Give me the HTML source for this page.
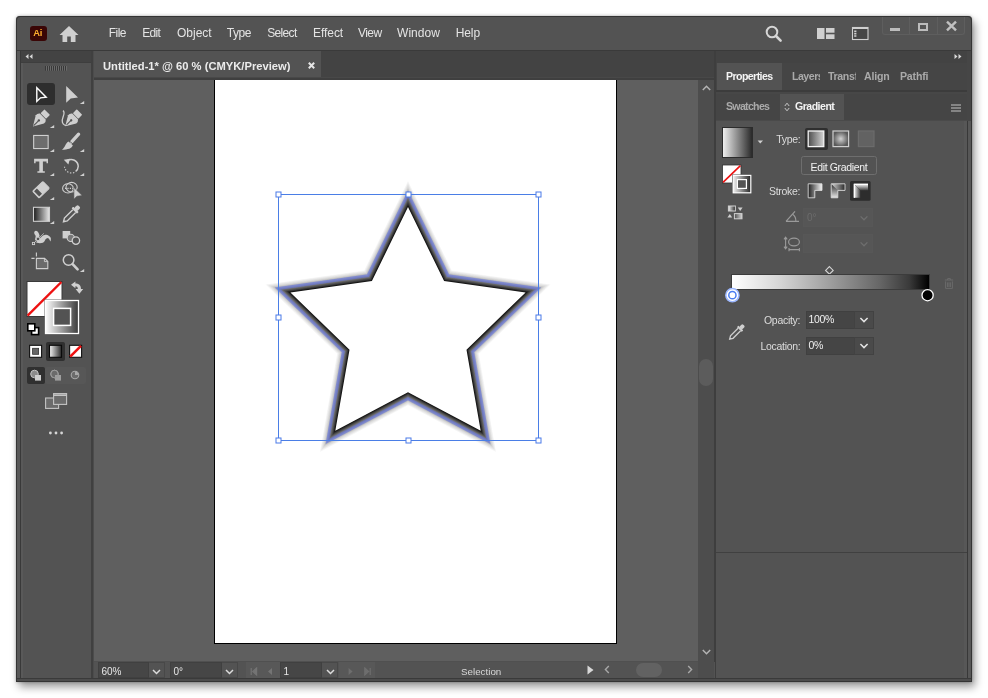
<!DOCTYPE html>
<html><head><meta charset="utf-8"><title>Illustrator</title>
<style>
*{box-sizing:border-box;margin:0;padding:0}
html,body{width:988px;height:698px;overflow:hidden;background:#fff}
body{position:relative;font-family:"Liberation Sans","DejaVu Sans",sans-serif;color:#dedede;font-size:12px}
.win{position:absolute;left:16px;top:16px;width:956px;height:666px;background:#535353;border-radius:4px 4px 0 0;box-shadow:3px 5px 9px rgba(0,0,0,.40),0 0 3px rgba(0,0,0,.3);overflow:hidden}
#o{position:absolute;left:-16px;top:-16px;width:988px;height:698px;will-change:transform}
#o div,#o span,#o svg{position:absolute}
#o svg{overflow:visible}
.t{white-space:nowrap;line-height:14px}
.menu .t{top:26px;font-size:12px;color:#e4e4e4}
.dim{color:#9b9b9b}
.fld{background:#454545;border:1px solid #3e3e3e}
</style></head><body>
<div class="win"><div id="o">
<!-- menubar -->
<div class="menu" style="left:16px;top:16px;width:956px;height:34px;background:#535353"></div>
<div class="menu" style="left:0;top:0"><span class="t" style="left:108.8px;letter-spacing:-0.53px">File</span><span class="t" style="left:142.2px;letter-spacing:-0.7px">Edit</span><span class="t" style="left:177.0px;letter-spacing:0px">Object</span><span class="t" style="left:226.79999999999998px;letter-spacing:-0.47px">Type</span><span class="t" style="left:267.3px;letter-spacing:-0.68px">Select</span><span class="t" style="left:313.0px;letter-spacing:-0.06px">Effect</span><span class="t" style="left:357.9px;letter-spacing:-0.53px">View</span><span class="t" style="left:397.0px;letter-spacing:0.06px">Window</span><span class="t" style="left:455.7px;letter-spacing:-0.1px">Help</span></div>
<div style="left:30px;top:25.6px;width:16.6px;height:15px;background:#3a0606;border-radius:3px"></div>
<span class="t" style="left:33.2px;top:26.4px;font-size:9.4px;font-weight:bold;color:#ffae2e;letter-spacing:-.2px">Ai</span>
<svg style="left:59px;top:24.6px" width="20" height="18" viewBox="0 0 20 18"><path d="M10 1 L19.5 10 H16.5 V17 H11.8 V11.5 H8.2 V17 H3.5 V10 H0.5 Z" fill="#cfcfcf"/></svg>
<svg style="left:764px;top:24px" width="22" height="22" viewBox="0 0 22 22"><circle cx="8" cy="8" r="5.3" fill="none" stroke="#d6d6d6" stroke-width="2"/><path d="M12 12 L16.6 16.6" stroke="#d6d6d6" stroke-width="2.6" stroke-linecap="round"/></svg>
<svg style="left:817px;top:28px" width="18" height="12" viewBox="0 0 18 12"><rect x="0" y="0" width="7.5" height="11" fill="#d0d0d0"/><rect x="9" y="0" width="8.5" height="4.7" fill="#d0d0d0"/><rect x="9" y="6.3" width="8.5" height="4.7" fill="#d0d0d0"/></svg>
<svg style="left:852px;top:27px" width="17" height="13" viewBox="0 0 17 13"><rect x=".5" y=".5" width="15.5" height="12" fill="#464646" stroke="#d0d0d0" stroke-width="1.1"/><path d="M.5 1.2 H16" stroke="#d0d0d0" stroke-width="1.6"/><path d="M3.3 3.4 V10.4" stroke="#d0d0d0" stroke-width="2.2" stroke-dasharray="1.6 .8"/></svg>
<div style="left:882px;top:17px;width:83px;height:18px;border:1px solid #5e5e5e;border-top:none;border-radius:0 0 3px 3px;background:#555"></div>
<div style="left:909px;top:17px;width:1px;height:17px;background:#5e5e5e"></div>
<div style="left:937px;top:17px;width:1px;height:17px;background:#5e5e5e"></div>
<div style="left:890px;top:28px;width:10px;height:3px;background:#bcbcbc"></div>
<div style="left:918px;top:22.5px;width:10.4px;height:8.4px;border:2px solid #bcbcbc"></div>
<svg style="left:945.5px;top:20.5px" width="11" height="10" viewBox="0 0 11 10"><path d="M1 .6 L10 9.4 M10 .6 L1 9.4" stroke="#c0c0c0" stroke-width="2.4"/></svg>
<!-- toolbar -->
<div style="left:16px;top:50px;width:78px;height:632px;background:#535353"></div>
<div style="left:16px;top:50px;width:5px;height:632px;background:#575757"></div>
<div style="left:20px;top:50px;width:1px;height:628px;background:#393939"></div>
<div style="left:21px;top:63px;width:2px;height:615px;background:#595959"></div>
<div style="left:21px;top:50px;width:70px;height:12px;background:#434343"></div>
<div style="left:21px;top:62px;width:70px;height:1px;background:#3e3e3e"></div>
<div style="left:91px;top:50px;width:2px;height:632px;background:#404040"></div>
<div style="left:93px;top:50px;width:1px;height:632px;background:#4c4c4c"></div>
<svg style="left:25.4px;top:54.2px" width="8" height="5" viewBox="0 0 8 6" preserveAspectRatio="none"><path d="M3.5 0 L0.5 3 L3.5 6 Z M7.5 0 L4.5 3 L7.5 6 Z" fill="#d8d8d8"/></svg>
<svg style="left:45px;top:65.6px" width="23" height="5"><rect x="0" y="0" width="1" height="4.6" fill="#383838"/><rect x="1" y="0" width="1" height="4.6" fill="#6a6a6a"/><rect x="2" y="0" width="1" height="4.6" fill="#383838"/><rect x="3" y="0" width="1" height="4.6" fill="#6a6a6a"/><rect x="4" y="0" width="1" height="4.6" fill="#383838"/><rect x="5" y="0" width="1" height="4.6" fill="#6a6a6a"/><rect x="6" y="0" width="1" height="4.6" fill="#383838"/><rect x="7" y="0" width="1" height="4.6" fill="#6a6a6a"/><rect x="8" y="0" width="1" height="4.6" fill="#383838"/><rect x="9" y="0" width="1" height="4.6" fill="#6a6a6a"/><rect x="10" y="0" width="1" height="4.6" fill="#383838"/><rect x="11" y="0" width="1" height="4.6" fill="#6a6a6a"/><rect x="12" y="0" width="1" height="4.6" fill="#383838"/><rect x="13" y="0" width="1" height="4.6" fill="#6a6a6a"/><rect x="14" y="0" width="1" height="4.6" fill="#383838"/><rect x="15" y="0" width="1" height="4.6" fill="#6a6a6a"/><rect x="16" y="0" width="1" height="4.6" fill="#383838"/><rect x="17" y="0" width="1" height="4.6" fill="#6a6a6a"/><rect x="18" y="0" width="1" height="4.6" fill="#383838"/><rect x="19" y="0" width="1" height="4.6" fill="#6a6a6a"/><rect x="20" y="0" width="1" height="4.6" fill="#383838"/><rect x="21" y="0" width="1" height="4.6" fill="#6a6a6a"/></svg>
<div style="left:27px;top:83px;width:28px;height:22px;background:#2e2e2e;border-radius:3px"></div>
<svg style="left:0;top:0" width="0" height="0"><defs><linearGradient id="tg" x1="0" x2="1"><stop offset="0" stop-color="#1c1c1c"/><stop offset="1" stop-color="#e8e8e8"/></linearGradient></defs></svg>
<svg style="left:29px;top:82px" width="24" height="24" viewBox="0 0 24 24"><path d="M7.8 5.8 V19.4 L11.5 15.8 L17.2 15.2 Z" fill="none" stroke="#fff" stroke-width="1.4" stroke-linejoin="miter"/></svg>
<svg style="left:60px;top:82px" width="24" height="24" viewBox="0 0 24 24"><path d="M6.2 4 V20.8 L10.7 16.4 L18 15.6 Z" fill="#cfcfcf"/><path d="M24.2 19 V22 H19.8 Z" fill="#cfcfcf"/></svg>
<svg style="left:29px;top:106px" width="24" height="24" viewBox="0 0 24 24"><g transform="translate(-0.3 0.6) rotate(45 12 12)"><path d="M12 23 L6.2 13.2 Q5.8 10.6 7.9 9 H16.1 Q18.2 10.6 17.8 13.2 Z" fill="#cfcfcf"/><path d="M12 22 V15.5" stroke="#535353" stroke-width="1.1"/><circle cx="12" cy="14.6" r="1.2" fill="#535353"/><rect x="8.1" y="2.8" width="7.8" height="5.6" rx=".8" fill="#cfcfcf"/></g><path d="M25.2 19 V22 H20.8 Z" fill="#cfcfcf"/></svg>
<svg style="left:60px;top:106px" width="24" height="24" viewBox="0 0 24 24"><g transform="translate(1.0 0.5) rotate(45 12 12)"><path d="M12 23 L6.2 13.2 Q5.8 10.6 7.9 9 H16.1 Q18.2 10.6 17.8 13.2 Z" fill="#cfcfcf"/><path d="M12 22 V15.5" stroke="#535353" stroke-width="1.1"/><circle cx="12" cy="14.6" r="1.2" fill="#535353"/><rect x="8.1" y="2.8" width="7.8" height="5.6" rx=".8" fill="#cfcfcf"/></g><path d="M3 4.6 C6.5 7 1 12 2.4 16.4 C3.2 19 5.4 19.8 7.4 19" fill="none" stroke="#cfcfcf" stroke-width="1.3"/></svg>
<svg style="left:29px;top:130px" width="24" height="24" viewBox="0 0 24 24"><rect x="4.65" y="5.45" width="14.5" height="13.1" fill="#6d6d6d" stroke="#cfcfcf" stroke-width="1.1"/><path d="M25.2 19 V22 H20.8 Z" fill="#cfcfcf"/></svg>
<svg style="left:60px;top:130px" width="24" height="24" viewBox="0 0 24 24"><path d="M18.6 4.2 L11.4 12.2" stroke="#cfcfcf" stroke-width="3.3" stroke-linecap="round"/><path d="M8.4 11.4 L12.8 15.2 C12 18.2 8 19.7 1.8 19.7 C5.2 17.6 5.4 13.2 8.4 11.4 Z" fill="#cfcfcf"/><path d="M8.6 10.4 L13.6 14.6" stroke="#535353" stroke-width=".9"/><path d="M24.2 19 V22 H19.8 Z" fill="#cfcfcf"/></svg>
<svg style="left:29px;top:154px" width="24" height="24" viewBox="0 0 24 24"><path d="M5.1 4.8 H19 V9.2 H17.5 V7.5 H13.9 V17.3 H15.8 V18.8 H8.4 V17.3 H10.3 V7.5 H6.6 V9.2 H5.1 Z" fill="#cfcfcf"/><path d="M25.2 19 V22 H20.8 Z" fill="#cfcfcf"/></svg>
<svg style="left:60px;top:154px" width="24" height="24" viewBox="0 0 24 24"><g transform="translate(11.2 11.8) scale(.88) translate(-12 -12)"><path d="M7.5 6.2 A8 8 0 0 1 20 12.5 A8 8 0 0 1 17 18.5" fill="none" stroke="#cfcfcf" stroke-width="1.7"/><path d="M3.6 5.2 L10.6 4 L8.8 10.6 Z" fill="#cfcfcf"/><path d="M15.5 19.6 A8 8 0 0 1 4.4 13" fill="none" stroke="#cfcfcf" stroke-width="1.3" stroke-dasharray="1.6 1.8"/></g><path d="M24.2 19 V22 H19.8 Z" fill="#cfcfcf"/></svg>
<svg style="left:29px;top:178px" width="24" height="24" viewBox="0 0 24 24"><g transform="translate(12 11.7) rotate(-44) scale(.94)"><rect x="-7.6" y="-5" width="15.2" height="10" rx="1" fill="#cfcfcf"/><rect x="-6.5" y="-3.9" width="4.2" height="7.8" fill="#535353"/><rect x="-7.6" y="-5" width="15.2" height="10" rx="1" fill="none" stroke="#cfcfcf" stroke-width="1.1"/></g><path d="M25.2 19 V22 H20.8 Z" fill="#cfcfcf"/></svg>
<svg style="left:60px;top:178px" width="24" height="24" viewBox="0 0 24 24"><ellipse cx="8" cy="10.4" rx="5.4" ry="4.6" fill="none" stroke="#cfcfcf" stroke-width="1.1"/><ellipse cx="11.6" cy="9.2" rx="5.6" ry="4.8" fill="none" stroke="#cfcfcf" stroke-width="1.1"/><path d="M5 10.4 H13" stroke="#cfcfcf" stroke-width="1.3" stroke-dasharray="1.2 1.2"/><path d="M13.9 9.4 V21.2 L17 18.2 L22.2 17.6 Z" fill="#cfcfcf" stroke="#535353" stroke-width=".6"/></svg>
<svg style="left:29px;top:202px" width="24" height="24" viewBox="0 0 24 24"><rect x="4.5" y="5.3" width="16" height="14" fill="url(#tg)" stroke="#cfcfcf" stroke-width="1.1"/><path d="M25.2 19 V22 H20.8 Z" fill="#cfcfcf"/></svg>
<svg style="left:60px;top:202px" width="24" height="24" viewBox="0 0 24 24"><g transform="translate(-1 .3) rotate(45 12 12)"><rect x="9.8" y="0.5" width="4.4" height="5" rx="1.5" fill="#cfcfcf"/><rect x="8.2" y="5" width="7.6" height="2.4" rx=".6" fill="#cfcfcf"/><path d="M10 7.4 V19.3 L12 22.6 L14 19.3 V7.4" fill="none" stroke="#cfcfcf" stroke-width="1.4"/></g></svg>
<svg style="left:29px;top:226px" width="24" height="24" viewBox="0 0 24 24"><path d="M5.4 5.8 C6 4.6 7.6 4.6 8.6 5.6 C10 7 10.4 9 10.9 11 C12.4 10.4 13.8 9.2 15.8 9 C17.4 8.6 18.6 9 19.7 9.7 C21.2 10.6 22 11.6 21.9 12.9 C21.9 14 21.7 14.8 21.3 15.5 C20.8 14 20.2 12.6 19 11.9 C17.8 12 17 12.6 16.4 13.5 C15.8 15 15 16.2 13.8 16.8 C12 17.4 10 17.4 8 16.8 C6.6 16.2 6 15.4 6 14.2 C6 12.8 6.6 11.6 6.7 10.3 C6.6 9.2 5.8 8.6 5.4 7.7 C5.1 7 5.1 6.4 5.4 5.8 Z" fill="#cfcfcf"/><path d="M4.6 17.4 L14.8 7.4" stroke="#535353" stroke-width="1.6"/><path d="M4.6 17.4 L14.8 7.4" stroke="#cfcfcf" stroke-width=".8"/><circle cx="9" cy="12.9" r="1.8" fill="#535353" stroke="#cfcfcf" stroke-width=".9"/><rect x="3.4" y="16.4" width="2.2" height="2.2" fill="#535353" stroke="#cfcfcf" stroke-width=".9"/></svg>
<svg style="left:60px;top:226px" width="24" height="24" viewBox="0 0 24 24"><rect x="2.6" y="5" width="7.6" height="7.4" fill="#cfcfcf"/><circle cx="10.8" cy="11.9" r="3.6" fill="#777" stroke="#cfcfcf" stroke-width="1.1"/><circle cx="15.9" cy="14.6" r="3.7" fill="#535353" stroke="#cfcfcf" stroke-width="1.3"/></svg>
<svg style="left:29px;top:250px" width="24" height="24" viewBox="0 0 24 24"><path d="M7.4 8.4 H15.6 L18.8 11.4 V18.6 H7.4 Z" fill="#6b6b6b" stroke="#cfcfcf" stroke-width="1.1"/><path d="M15.4 8.6 V11.6 H18.6" fill="none" stroke="#cfcfcf" stroke-width=".9"/><path d="M7.4 2.4 V6.6 M2.4 8.4 H5.6" stroke="#cfcfcf" stroke-width="1.1"/></svg>
<svg style="left:60px;top:250px" width="24" height="24" viewBox="0 0 24 24"><circle cx="8.6" cy="10" r="5.3" fill="none" stroke="#cfcfcf" stroke-width="1.5"/><path d="M12.6 14.2 L17.6 19.4" stroke="#cfcfcf" stroke-width="2.6" stroke-linecap="round"/><path d="M24.2 19 V22 H19.8 Z" fill="#cfcfcf"/></svg>
<svg style="left:0;top:0" width="988" height="698" viewBox="0 0 988 698">
<defs><linearGradient id="sg" x1="0" x2="1"><stop offset="0" stop-color="#fdfdfd"/><stop offset="1" stop-color="#3a3a3a"/></linearGradient>
<linearGradient id="sg2" x1="0" x2="1"><stop offset="0" stop-color="#f4f4f4"/><stop offset="1" stop-color="#2a2a2a"/></linearGradient></defs>
<rect x="27" y="281.5" width="35" height="35" fill="#fff" stroke="#3a3a3a" stroke-width="1"/>
<path d="M27.6 315.6 L61.4 282" stroke="#ee1111" stroke-width="2.4"/>
<rect x="44.5" y="299.5" width="35" height="35" fill="#535353"/>
<rect x="45.5" y="300.5" width="33" height="33" fill="url(#sg)" stroke="#fff" stroke-width="1.3"/>
<rect x="53.6" y="308.4" width="17" height="17" fill="#535353" stroke="#fff" stroke-width="1.5"/>
<path d="M71 284.8 L75.4 281.4 V283.5 C79.8 283.5 81 286 81 289 H83.2 L79.4 293.8 L75.6 289 H77.8 C77.8 287.2 77.2 286.2 75.4 286.2 V288.2 Z" fill="#cfcfcf"/>
<rect x="31.6" y="327.6" width="7" height="7" fill="#fff" stroke="#000" stroke-width="1.6"/>
<rect x="27.8" y="323.8" width="7" height="7" fill="#fff" stroke="#000" stroke-width="1.6"/>
<rect x="46" y="342" width="19" height="19" rx="2" fill="#303030"/>
<rect x="29.6" y="345.3" width="12" height="12" fill="#fff" stroke="#111" stroke-width="1.1"/>
<rect x="32.6" y="348.3" width="6" height="6" fill="#666" stroke="#333" stroke-width=".8"/>
<rect x="49.5" y="345.3" width="12" height="12" fill="url(#sg2)" stroke="#0a0a0a" stroke-width="1.1"/>
<rect x="69.6" y="345.3" width="12" height="12" fill="#fff" stroke="#111" stroke-width="1.1"/>
<path d="M70.2 356.7 L81 345.9" stroke="#ee1111" stroke-width="2.6"/>
<rect x="45" y="367" width="41" height="17" rx="2" fill="#575757"/>
<rect x="27" y="367" width="18" height="17" rx="2" fill="#303030"/>
<circle cx="34.5" cy="374" r="3.8" fill="#8c8c8c" stroke="#c4c4c4" stroke-width="1"/><rect x="35" y="375" width="6" height="5.6" fill="#d0d0d0"/>
<circle cx="54.5" cy="374" r="3.8" fill="#6b6b6b" stroke="#9a9a9a" stroke-width="1"/><rect x="55" y="375" width="6" height="5.6" fill="#9e9e9e"/><circle cx="54.5" cy="374" r="3.8" fill="none" stroke="#9a9a9a" stroke-width="1"/>
<circle cx="75" cy="375" r="3.8" fill="#6b6b6b" stroke="#a8a8a8" stroke-width="1.1"/><path d="M75 375 V371.4 A3.6 3.6 0 0 1 78.6 375 Z" fill="#a8a8a8"/>
<rect x="45.6" y="398" width="13" height="10.4" fill="#6b6b6b" stroke="#c4c4c4" stroke-width="1.1"/>
<rect x="53.6" y="393.6" width="13" height="10.8" fill="#6b6b6b" stroke="#c4c4c4" stroke-width="1.1"/><path d="M53.6 395.2 H66.6" stroke="#c4c4c4" stroke-width="1.6"/>
<circle cx="50.4" cy="433" r="1.4" fill="#d6d6d6"/><circle cx="56" cy="433" r="1.4" fill="#d6d6d6"/><circle cx="61.6" cy="433" r="1.4" fill="#d6d6d6"/>
</svg>

<!-- tabbar -->
<div style="left:94px;top:50px;width:621px;height:30px;background:#434343"></div>
<div style="left:94px;top:50px;width:227px;height:28px;background:#535353"></div>
<div style="left:94px;top:77px;width:621px;height:1px;background:#484848"></div>
<div style="left:94px;top:78px;width:621px;height:2px;background:#3f3f3f"></div>
<span class="t" style="left:103px;top:58.5px;font-size:11.2px;font-weight:bold;color:#ececec;letter-spacing:0px">Untitled-1* @ 60 % (CMYK/Preview)</span>
<svg style="left:307.5px;top:62px" width="7" height="7" viewBox="0 0 7 7"><path d="M.8 .8 L6.2 6.2 M6.2 .8 L.8 6.2" stroke="#e6e6e6" stroke-width="2"/></svg>
<!-- canvas -->
<div style="left:94px;top:80px;width:604px;height:582px;background:#5f5f5f;overflow:hidden">
<div style="left:120px;top:-11px;width:403px;height:575px;background:#fff;border:1px solid #000"></div>
</div>
<svg style="left:0;top:0" width="988" height="698" viewBox="0 0 988 698">
<polygon points="408.0,180.9 451.8,270.4 550.5,284.4 478.9,353.7 496.0,451.9 408.0,405.2 320.0,451.9 337.1,353.7 265.5,284.4 364.2,270.4" fill="#f7f7f7"/>
<polygon points="408.0,182.2 451.4,270.9 549.2,284.8 478.2,353.5 495.3,450.8 408.0,404.6 320.7,450.8 337.8,353.5 266.8,284.8 364.6,270.9" fill="#f0f0f0"/>
<polygon points="408.0,183.5 451.0,271.5 548.0,285.2 477.6,353.3 494.5,449.8 408.0,403.9 321.5,449.8 338.4,353.3 268.0,285.2 365.0,271.5" fill="#e9e9e9"/>
<polygon points="408.0,184.8 450.6,272.0 546.7,285.6 477.0,353.1 493.7,448.7 408.0,403.3 322.3,448.7 339.0,353.1 269.3,285.6 365.4,272.0" fill="#e2e2e2"/>
<polygon points="408.0,186.2 450.3,272.5 545.5,286.0 476.4,352.9 493.0,447.6 408.0,402.6 323.0,447.6 339.6,352.9 270.5,286.0 365.7,272.5" fill="#dbdbdb"/>
<polygon points="408.0,187.5 449.9,273.1 544.2,286.4 475.8,352.7 492.2,446.6 408.0,402.0 323.8,446.6 340.2,352.7 271.8,286.4 366.1,273.1" fill="#d2d2d2"/>
<polygon points="408.0,188.8 449.5,273.6 543.0,286.8 475.1,352.5 491.4,445.5 408.0,401.3 324.6,445.5 340.9,352.5 273.0,286.8 366.5,273.6" fill="#c6c6c6"/>
<polygon points="408.0,190.1 449.1,274.1 541.7,287.2 474.5,352.3 490.7,444.5 408.0,400.7 325.3,444.5 341.5,352.3 274.3,287.2 366.9,274.1" fill="#bababa"/>
<polygon points="408.0,191.4 448.7,274.6 540.5,287.6 473.9,352.1 489.9,443.4 408.0,400.0 326.1,443.4 342.1,352.1 275.5,287.6 367.3,274.6" fill="#aeaeae"/>
<polygon points="408.0,192.7 448.4,275.2 539.3,288.1 473.3,351.9 489.1,442.4 408.0,399.4 326.9,442.4 342.7,351.9 276.7,288.1 367.6,275.2" fill="#a2a2a2"/>
<polygon points="408.0,194.0 448.0,275.7 538.0,288.5 472.7,351.7 488.4,441.3 408.0,398.7 327.6,441.3 343.3,351.7 278.0,288.5 368.0,275.7" fill="#959595"/>
<polygon points="408.0,195.3 447.6,276.2 536.8,288.9 472.1,351.5 487.6,440.2 408.0,398.0 328.4,440.2 343.9,351.5 279.2,288.9 368.4,276.2" fill="#888888"/>
<polygon points="408.0,196.6 447.2,276.7 535.5,289.3 471.4,351.3 486.8,439.2 408.0,397.4 329.2,439.2 344.6,351.3 280.5,289.3 368.8,276.7" fill="#7a7a7a"/>
<polygon points="408.0,197.9 446.8,277.3 534.3,289.7 470.8,351.1 486.0,438.1 408.0,396.7 330.0,438.1 345.2,351.1 281.7,289.7 369.2,277.3" fill="#6c6c6c"/>
<polygon points="408.0,199.2 446.4,277.8 533.0,290.1 470.2,350.9 485.3,437.1 408.0,396.1 330.7,437.1 345.8,350.9 283.0,290.1 369.6,277.8" fill="#5e5e5e"/>
<polygon points="408.0,200.5 446.1,278.3 531.8,290.5 469.6,350.7 484.5,436.0 408.0,395.4 331.5,436.0 346.4,350.7 284.2,290.5 369.9,278.3" fill="#515151"/>
<polygon points="408.0,201.8 445.7,278.8 530.5,290.9 469.0,350.5 483.7,434.9 408.0,394.8 332.3,434.9 347.0,350.5 285.5,290.9 370.3,278.8" fill="#424242"/>
<polygon points="408.0,203.2 445.3,279.4 529.3,291.3 468.3,350.3 483.0,433.9 408.0,394.1 333.0,433.9 347.7,350.3 286.7,291.3 370.7,279.4" fill="#313131"/>
<polygon points="408.0,204.5 444.9,279.9 528.1,291.7 467.7,350.1 482.2,432.8 408.0,393.5 333.8,432.8 348.3,350.1 287.9,291.7 371.1,279.9" fill="#212121"/>
<polygon points="408.0,205.8 444.5,280.4 526.8,292.1 467.1,349.9 481.4,431.8 408.0,392.8 334.6,431.8 348.9,349.9 289.2,292.1 371.5,280.4" fill="#101010"/>
<polygon points="408.0,207.1 444.1,281.0 525.6,292.5 466.5,349.7 480.7,430.7 408.0,392.2 335.3,430.7 349.5,349.7 290.4,292.5 371.9,281.0" fill="#ffffff"/>
<polygon points="408.0,194.0 448.0,275.7 538.0,288.5 472.7,351.7 488.4,441.3 408.0,398.7 327.6,441.3 343.3,351.7 278.0,288.5 368.0,275.7" fill="none" stroke="#5468f0" stroke-width="3" stroke-opacity=".5"/>
<rect x="278.5" y="194.5" width="260.0" height="246.0" fill="none" stroke="#4a7ee6" stroke-width="1"/>
<rect x="276.0" y="192.0" width="5" height="5" fill="#fff" stroke="#4a7ae8" stroke-width="1"/>
<rect x="276.0" y="315.0" width="5" height="5" fill="#fff" stroke="#4a7ae8" stroke-width="1"/>
<rect x="276.0" y="438.0" width="5" height="5" fill="#fff" stroke="#4a7ae8" stroke-width="1"/>
<rect x="406.0" y="192.0" width="5" height="5" fill="#fff" stroke="#4a7ae8" stroke-width="1"/>
<rect x="406.0" y="438.0" width="5" height="5" fill="#fff" stroke="#4a7ae8" stroke-width="1"/>
<rect x="536.0" y="192.0" width="5" height="5" fill="#fff" stroke="#4a7ae8" stroke-width="1"/>
<rect x="536.0" y="315.0" width="5" height="5" fill="#fff" stroke="#4a7ae8" stroke-width="1"/>
<rect x="536.0" y="438.0" width="5" height="5" fill="#fff" stroke="#4a7ae8" stroke-width="1"/>
</svg>

<div style="left:698px;top:80px;width:16px;height:582px;background:#4d4d4d"></div>
<div style="left:699px;top:358.5px;width:14px;height:27px;background:#5c5c5c;border-radius:7px"></div>
<svg style="left:702px;top:85px" width="9" height="6" viewBox="0 0 9 6"><path d="M.8 5 L4.5 1.3 L8.2 5" fill="none" stroke="#b4b4b4" stroke-width="1.5"/></svg>
<svg style="left:702px;top:649px" width="9" height="6" viewBox="0 0 9 6"><path d="M.8 1 L4.5 4.7 L8.2 1" fill="none" stroke="#b4b4b4" stroke-width="1.5"/></svg>
<div style="left:714px;top:50px;width:2px;height:632px;background:#3e3e3e"></div>
<div style="left:94px;top:662px;width:621px;height:16px;background:#535353"></div>
<div style="left:94px;top:661px;width:604px;height:1px;background:#505050"></div>
<div style="left:98px;top:662px;width:51px;height:16px;background:#464646;border:1px solid #404040"></div>
<span class="t" style="left:101.4px;top:664.8px;font-size:10px;color:#e6e6e6">60%</span>
<div style="left:170px;top:662px;width:52px;height:16px;background:#464646;border:1px solid #404040"></div>
<span class="t" style="left:173.4px;top:664.8px;font-size:10px;color:#e6e6e6">0°</span>
<div style="left:280px;top:662px;width:42px;height:16px;background:#464646;border:1px solid #404040"></div>
<span class="t" style="left:283.4px;top:664.8px;font-size:10px;color:#e6e6e6">1</span>
<svg style="left:152px;top:669px" width="9" height="6" viewBox="0 0 9 6"><path d="M1 1 L4.5 4.5 L8 1" fill="none" stroke="#dcdcdc" stroke-width="1.5"/></svg>
<svg style="left:225px;top:669px" width="9" height="6" viewBox="0 0 9 6"><path d="M1 1 L4.5 4.5 L8 1" fill="none" stroke="#dcdcdc" stroke-width="1.5"/></svg>
<svg style="left:326px;top:669px" width="9" height="6" viewBox="0 0 9 6"><path d="M1 1 L4.5 4.5 L8 1" fill="none" stroke="#dcdcdc" stroke-width="1.5"/></svg>
<div style="left:149px;top:662px;width:16px;height:16px;border:1px solid #484848;border-left:none"></div>
<div style="left:222px;top:662px;width:16px;height:16px;border:1px solid #484848;border-left:none"></div>
<div style="left:322px;top:662px;width:16px;height:16px;border:1px solid #484848;border-left:none"></div>
<svg style="left:246px;top:662px" width="130" height="16" viewBox="0 0 130 16">
<rect x="0" y="0" width="34" height="16" fill="#585858"/><rect x="93" y="0" width="36" height="16" fill="#585858"/>
<path d="M5.2 6 V13 M10.6 6 L6.8 9.5 L10.6 13 Z" stroke="#747474" stroke-width="1.2" fill="#747474"/>
<path d="M26 6 L22 9.5 L26 13 Z" fill="#747474"/>
<path d="M102.6 6 L106.6 9.5 L102.6 13 Z" fill="#6e6e6e"/>
<path d="M118.8 6 L122.6 9.5 L118.8 13 Z M124.2 6 V13" stroke="#6e6e6e" stroke-width="1.2" fill="#6e6e6e"/>
</svg>
<span class="t" style="left:461px;top:664.5px;font-size:9.8px;color:#d8d8d8">Selection</span>
<svg style="left:587px;top:665px" width="7" height="10" viewBox="0 0 7 10"><path d="M.5 .5 L6.5 5 L.5 9.5 Z" fill="#d8d8d8"/></svg>
<svg style="left:604px;top:665px" width="6" height="9" viewBox="0 0 6 9"><path d="M4.8 1 L1.4 4.5 L4.8 8" fill="none" stroke="#a8a8a8" stroke-width="1.4"/></svg>
<svg style="left:687px;top:665px" width="6" height="9" viewBox="0 0 6 9"><path d="M1.2 1 L4.6 4.5 L1.2 8" fill="none" stroke="#a8a8a8" stroke-width="1.4"/></svg>
<div style="left:636px;top:663px;width:26px;height:14px;background:#626262;border-radius:7px"></div>
<div style="left:698px;top:662px;width:16px;height:16px;background:#4d4d4d"></div>

<div style="left:716px;top:50px;width:256px;height:632px;background:#535353"></div>
<div style="left:716px;top:50px;width:256px;height:13px;background:#434343"></div>
<svg style="left:953.6px;top:54.2px" width="8" height="5" viewBox="0 0 8 6" preserveAspectRatio="none"><path d="M.5 0 L3.5 3 L.5 6 Z M4.5 0 L7.5 3 L4.5 6 Z" fill="#d8d8d8"/></svg>
<div style="left:716px;top:63px;width:251px;height:27px;background:#454545"></div>
<div style="left:717px;top:63px;width:65px;height:27px;background:#535353"></div>
<span class="t" style="left:726px;top:68.7px;font-size:10.6px;font-weight:bold;color:#f4f4f4;letter-spacing:-.58px">Properties</span>
<div style="left:792px;top:68.7px;width:28px;height:14px;overflow:hidden"><span class="t" style="left:0;top:0;font-size:10.6px;font-weight:bold;color:#aaaaaa;letter-spacing:-.5px">Layers</span></div>
<div style="left:828px;top:68.7px;width:28px;height:14px;overflow:hidden"><span class="t" style="left:0;top:0;font-size:10.6px;font-weight:bold;color:#aaaaaa;letter-spacing:-.35px">Transform</span></div>
<span class="t" style="left:864px;top:68.7px;font-size:10.6px;font-weight:bold;color:#aaaaaa;letter-spacing:-.2px">Align</span>
<div style="left:900px;top:68.7px;width:28px;height:14px;overflow:hidden"><span class="t" style="left:0;top:0;font-size:10.6px;font-weight:bold;color:#aaaaaa;letter-spacing:-.2px">Pathfinder</span></div>
<div style="left:716px;top:90px;width:251px;height:2px;background:#3c3c3c"></div>
<div style="left:716px;top:92px;width:251px;height:2px;background:#474747"></div>
<div style="left:716px;top:94px;width:251px;height:26px;background:#454545"></div>
<div style="left:780px;top:94px;width:64px;height:27px;background:#535353"></div>
<span class="t" style="left:726px;top:99.4px;font-size:10.6px;font-weight:bold;color:#aaaaaa;letter-spacing:-.7px">Swatches</span>
<span class="t" style="left:795px;top:99.4px;font-size:10.6px;font-weight:bold;color:#f4f4f4;letter-spacing:-.53px">Gradient</span>
<svg style="left:784px;top:102px" width="6" height="10" viewBox="0 0 6 10"><path d="M.8 4 L3 1.2 L5.2 4 M.8 6 L3 8.8 L5.2 6" fill="none" stroke="#c8c8c8" stroke-width="1"/></svg>
<svg style="left:951px;top:104px" width="10" height="8" viewBox="0 0 10 8"><path d="M0 1 H10 M0 4 H10 M0 7 H10" stroke="#c4c4c4" stroke-width="1.1"/></svg>
<div style="left:716px;top:120px;width:251px;height:1px;background:#4a4a4a"></div>
<div style="left:964px;top:121px;width:3px;height:557px;background:#575757"></div>
<div style="left:967px;top:51px;width:5px;height:70px;background:#464646"></div>
<div style="left:967px;top:121px;width:1px;height:558px;background:#383838"></div>
<div style="left:968px;top:121px;width:4px;height:561px;background:#575757"></div>
<div style="left:716px;top:552px;width:251px;height:1px;background:#404040"></div>

<svg style="left:0;top:0" width="988" height="698" viewBox="0 0 988 698">
<defs>
<linearGradient id="pg" x1="0" x2="1"><stop offset="0" stop-color="#f2f2f2"/><stop offset="1" stop-color="#262626"/></linearGradient>
<linearGradient id="pl" x1="0" x2="1"><stop offset="0" stop-color="#4c4c4c"/><stop offset="1" stop-color="#d4d4d4"/></linearGradient>
<radialGradient id="pr"><stop offset="0" stop-color="#d2d2d2"/><stop offset="1" stop-color="#5a5a5a"/></radialGradient>
<linearGradient id="pbar" x1="0" x2="1"><stop offset="0" stop-color="#ffffff"/><stop offset=".25" stop-color="#d4d4d4"/><stop offset=".5" stop-color="#9e9e9e"/><stop offset=".75" stop-color="#666"/><stop offset=".9" stop-color="#3a3a3a"/><stop offset="1" stop-color="#000000"/></linearGradient>
<linearGradient id="st" x1="0" x2="1"><stop offset="0" stop-color="#4a4a4a"/><stop offset="1" stop-color="#e6e6e6"/></linearGradient>
<linearGradient id="st2" x1="0" y1="0" x2="1" y2="1"><stop offset="0" stop-color="#4a4a4a"/><stop offset="1" stop-color="#ececec"/></linearGradient>
<linearGradient id="sa" x1="0" x2="1"><stop offset="0" stop-color="#1e1e1e"/><stop offset="1" stop-color="#f6f6f6"/></linearGradient>
<linearGradient id="sb" x1="0" y1="0" x2="0" y2="1"><stop offset="0" stop-color="#2a2a2a"/><stop offset="1" stop-color="#e8e8e8"/></linearGradient>
<linearGradient id="sc" x1="0" x2="1"><stop offset="0" stop-color="#d8d8d8"/><stop offset="1" stop-color="#2a2a2a"/></linearGradient>
<linearGradient id="sd" x1="0" x2="1"><stop offset="0" stop-color="#ffffff"/><stop offset="1" stop-color="#3a3a3a"/></linearGradient>
<linearGradient id="se" x1="0" y1="0" x2="0" y2="1"><stop offset="0" stop-color="#ffffff"/><stop offset="1" stop-color="#3a3a3a"/></linearGradient>
</defs>
<rect x="722.5" y="127.5" width="30" height="30" fill="url(#pg)" stroke="#2c2c2c" stroke-width="1"/>
<path d="M757.6 140.6 H763 L760.3 143.6 Z" fill="#d0d0d0"/>
<rect x="805" y="128" width="23" height="22" rx="2" fill="#2f2f2f"/>
<rect x="808.2" y="131" width="15.6" height="15.6" fill="url(#pl)" stroke="#f4f4f4" stroke-width="1.3"/>
<rect x="833" y="131" width="15.6" height="15.6" fill="url(#pr)" stroke="#cfcfcf" stroke-width="1.2"/>
<rect x="858.4" y="131" width="15.6" height="15.6" fill="#626262" stroke="#6c6c6c" stroke-width="1.2"/>
<rect x="801.5" y="156.5" width="75" height="18" rx="2" fill="none" stroke="#6e6e6e" stroke-width="1"/>
<rect x="722.5" y="165" width="18.5" height="18" fill="#fff" stroke="#333" stroke-width=".8"/>
<path d="M723 182.4 L740.4 165.6" stroke="#ee1111" stroke-width="1.6"/>
<rect x="732" y="174.4" width="19.6" height="19.2" fill="#535353"/>
<rect x="733.2" y="175.4" width="17.6" height="17.4" fill="url(#pg)" stroke="#fff" stroke-width="1.2"/>
<rect x="737.4" y="179.6" width="9" height="8.8" fill="#535353" stroke="#fff" stroke-width="1.2"/>
<!-- stroke buttons -->
<path d="M808.2 183.8 H822 V190.4 H814.8 V197.8 H808.2 Z" fill="url(#sa)" stroke="#dadada" stroke-width=".9"/>
<path d="M831.2 183.8 L837.8 190.4 V197.8 H831.2 Z" fill="url(#sb)"/>
<path d="M831.2 183.8 H845 V190.4 H837.8 Z" fill="url(#sc)"/>
<path d="M831.2 183.8 H845 V190.4 H837.8 V197.8 H831.2 Z" fill="none" stroke="#dadada" stroke-width=".9"/>
<rect x="850" y="181" width="20.6" height="19.8" rx="1.5" fill="#2d2d2d"/>
<path d="M853.8 183.8 L860.4 190.4 V197.8 H853.8 Z" fill="url(#sd)"/>
<path d="M853.8 183.8 H868 V190.4 H860.4 Z" fill="url(#se)"/>
<path d="M854.4 197.8 V184.4 H868" fill="none" stroke="#fff" stroke-width="1.3"/>
<!-- reverse gradient -->
<rect x="728.4" y="206" width="7" height="5" fill="url(#pg)" stroke="#cfcfcf" stroke-width="1"/>
<path d="M737.8 207.4 H742.6 L740.2 211 Z" fill="#cfcfcf"/>
<rect x="734.4" y="213.6" width="7.6" height="5.2" fill="url(#pl)" stroke="#cfcfcf" stroke-width="1"/>
<path d="M727.4 217.6 H732.2 L729.8 214 Z" fill="#cfcfcf"/>
<!-- angle -->
<path d="M786 221.4 H799 M786 221.4 L795 211.4" fill="none" stroke="#9a9a9a" stroke-width="1.2"/><path d="M792.6 214.2 A8 8 0 0 1 795.8 221.4" fill="none" stroke="#9a9a9a" stroke-width="1.1"/>
<rect x="803.5" y="208.5" width="69" height="18" fill="#565656" stroke="#575757" stroke-width="1"/>
<path d="M860.6 216.4 L864 219.8 L867.4 216.4" fill="none" stroke="#6e6e6e" stroke-width="1.3"/>
<!-- aspect -->
<ellipse cx="794" cy="242" rx="5.4" ry="3.8" fill="none" stroke="#9a9a9a" stroke-width="1.2"/>
<path d="M785.6 237.4 V248.6 M784 239.4 L785.6 237.2 L787.2 239.4 M784 246.6 L785.6 248.8 L787.2 246.6 M789 249.6 H799.4 M789 248 V251.2 M799.4 248 V251.2" fill="none" stroke="#9a9a9a" stroke-width="1.1"/>
<rect x="803.5" y="234.5" width="69" height="18" fill="#565656" stroke="#575757" stroke-width="1"/>
<path d="M860.6 242.4 L864 245.8 L867.4 242.4" fill="none" stroke="#6e6e6e" stroke-width="1.3"/>
<!-- slider -->
<path d="M829.4 266.6 L833.2 270.4 L829.4 274.2 L825.6 270.4 Z" fill="#535353" stroke="#d6d6d6" stroke-width="1.1"/>
<rect x="732" y="275" width="197" height="14" fill="url(#pbar)"/>
<rect x="731.5" y="274.5" width="198" height="15" fill="none" stroke="#3c3c3c" stroke-width="1"/>
<circle cx="732.4" cy="295.2" r="6.6" fill="#fff" stroke="#9db8ff" stroke-width="1.5"/>
<circle cx="732.4" cy="295.2" r="3.6" fill="#fff" stroke="#4a7df0" stroke-width="1.5"/>
<circle cx="927.6" cy="295.2" r="5.6" fill="#000" stroke="#fff" stroke-width="1.3"/>
<!-- trash -->
<path transform="translate(-.8 -1)" d="M945.6 281 H954 M948.4 281 V279.6 H951.2 V281 M946.4 282.4 V289.4 H953.2 V282.4 M948.4 283.4 V288 M949.8 283.4 V288 M951.2 283.4 V288" fill="none" stroke="#6a6a6a" stroke-width="1"/>
<!-- eyedropper -->
<g transform="translate(736.4 332.4) scale(.9) translate(-12 -12) rotate(45 12 12)"><rect x="9.8" y="0.5" width="4.4" height="5" rx="1.5" fill="#cfcfcf"/><rect x="8.2" y="5" width="7.6" height="2.4" rx=".6" fill="#cfcfcf"/><path d="M10 7.4 V19.3 L12 22.6 L14 19.3 V7.4" fill="none" stroke="#cfcfcf" stroke-width="1.4"/></g>
<!-- fields -->
<rect x="806.5" y="311.5" width="48" height="17" fill="#454545" stroke="#404040" stroke-width="1"/>
<rect x="854.5" y="311.5" width="19" height="17" fill="#4a4a4a" stroke="#424242" stroke-width="1"/>
<path d="M860.4 318 L864 321.6 L867.6 318" fill="none" stroke="#e4e4e4" stroke-width="1.5"/>
<rect x="806.5" y="337.5" width="48" height="17" fill="#454545" stroke="#404040" stroke-width="1"/>
<rect x="854.5" y="337.5" width="19" height="17" fill="#4a4a4a" stroke="#424242" stroke-width="1"/>
<path d="M860.4 344 L864 347.6 L867.6 344" fill="none" stroke="#e4e4e4" stroke-width="1.5"/>
</svg>
<span class="t" style="left:776.3px;top:131.8px;font-size:10.5px;color:#dcdcdc;letter-spacing:-.3px">Type:</span>
<span class="t" style="left:769px;top:184px;font-size:10.5px;color:#dcdcdc;letter-spacing:-.3px">Stroke:</span>
<span class="t" style="left:810.5px;top:159.5px;font-size:10.5px;color:#f2f2f2;letter-spacing:-.35px">Edit Gradient</span>
<span class="t" style="left:807px;top:211px;font-size:10px;color:#6c6c6c">0°</span>
<span class="t" style="left:764px;top:312.7px;font-size:10.5px;color:#dcdcdc;letter-spacing:-.3px">Opacity:</span>
<span class="t" style="left:760.5px;top:338.7px;font-size:10.5px;color:#dcdcdc;letter-spacing:-.3px">Location:</span>
<span class="t" style="left:808.5px;top:312.4px;font-size:10.5px;color:#f0f0f0;letter-spacing:-.3px">100%</span>
<span class="t" style="left:808.5px;top:338.4px;font-size:10.5px;color:#f0f0f0;letter-spacing:-.3px">0%</span>


<div style="left:16px;top:50px;width:956px;height:1px;background:#3a3a3a"></div>
<div style="left:16px;top:678px;width:956px;height:1px;background:#3a3a3a"></div>
<div style="left:16px;top:679px;width:956px;height:3px;background:#4c4c4c"></div>
<div style="left:16px;top:681px;width:956px;height:1px;background:#383838"></div>
<div style="left:16px;top:16px;width:956px;height:666px;border:1px solid #343434;border-radius:4px 4px 0 0"></div>
</div></div>
</body></html>
